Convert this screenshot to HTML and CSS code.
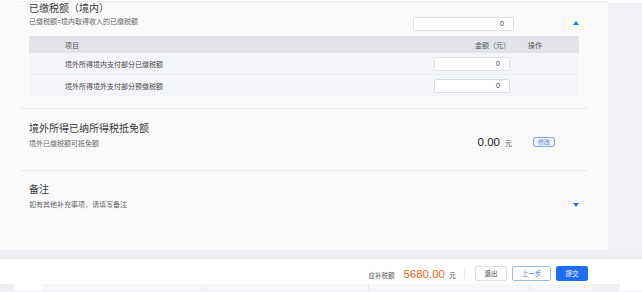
FILE: index.html
```html
<!DOCTYPE html>
<html lang="zh-CN">
<head>
    <meta charset="UTF-8">
    <title>已缴税额</title>
    <link rel="stylesheet" href="styles.css">
</head>
<body>
    <div class="page">
        <div class="main">
            <div class="top-edge"></div>

            <!-- 已缴税额（境内） -->
            <section class="block block-paid">
                <div class="block-head">
                    <div class="block-text">
                        <div class="block-title">已缴税额（境内）</div>
                        <div class="block-sub">已缴税额=境内取得收入的已缴税额</div>
                    </div>
                    <div class="block-side">
                        <div class="amount-input wide">0</div>
                        <span class="side-sep"></span>
                        <span class="caret up"></span>
                    </div>
                </div>
                <div class="items">
                    <div class="items-row items-header">
                        <div class="col-name">项目</div>
                        <div class="col-amount">金额（元）</div>
                        <div class="col-ops">操作</div>
                    </div>
                    <div class="items-row">
                        <div class="col-name">境外所得境内支付部分已缴税额</div>
                        <div class="col-amount"><div class="amount-input">0</div></div>
                        <div class="col-ops"></div>
                    </div>
                    <div class="items-row">
                        <div class="col-name">境外所得境外支付部分预缴税额</div>
                        <div class="col-amount"><div class="amount-input">0</div></div>
                        <div class="col-ops"></div>
                    </div>
                </div>
            </section>

            <!-- 境外所得已纳所得税抵免额 -->
            <section class="block block-credit">
                <div class="block-head">
                    <div class="block-text">
                        <div class="block-title">境外所得已纳所得税抵免额</div>
                        <div class="block-sub">境外已缴税额可抵免额</div>
                    </div>
                    <div class="block-side credit-side">
                        <span class="money">0.00</span>
                        <span class="unit">元</span>
                        <span class="edit-btn">修改</span>
                    </div>
                </div>
            </section>

            <!-- 备注 -->
            <section class="block block-note">
                <div class="block-head">
                    <div class="block-text">
                        <div class="block-title">备注</div>
                        <div class="block-sub">如有其他补充事项，请填写备注</div>
                    </div>
                    <div class="block-side note-side">
                        <span class="side-sep"></span>
                        <span class="caret down"></span>
                    </div>
                </div>
            </section>
        </div>
        <div class="aside"></div>
    </div>

    <div class="footer">
        <span class="due-label">应补税额</span>
        <span class="due-value">5680.00</span>
        <span class="unit">元</span>
        <span class="footer-sep"></span>
        <button class="btn">退出</button>
        <button class="btn btn-ghost">上一步</button>
        <button class="btn btn-primary">提交</button>
    </div>

    <div class="under">
        <div class="under-cell c1"></div>
        <div class="under-cell c2"></div>
        <div class="under-cell c3"></div>
        <div class="under-cell c4"></div>
        <div class="under-cell c5"></div>
        <div class="under-cell c6"></div>
        <div class="under-cell c7"></div>
        <div class="under-cell c8"></div>
    </div>
</body>
</html>
```

FILE: styles.css
```css
body {
    margin: 0;
    padding: 0;
    background-color: #eff1f5;
    font-family: 'Liberation Sans', 'Noto Sans CJK SC', sans-serif;
    color: #333;
    width: 642px;
    height: 292px;
    overflow: hidden;
}

.page {
    display: flex;
    height: 250px;
    border-bottom: 8px solid #eef0f4;
}

.main {
    width: 608px;
    background-color: #fafafa;
    padding: 0 20px;
    box-sizing: border-box;
}

.aside {
    flex: 1;
    background-color: #f0f2f6;
    border-top: 3px solid #fff;
}

.top-edge {
    height: 3px;
    background: linear-gradient(#fff 0, #fff 1px, #ebecef 1px, #ebecef 2px, #fafafa 2px);
    margin-right: -22px;
}

.block {
    padding: 0 9px;
    border-bottom: 1px solid #ebecef;
}

.block-head {
    display: flex;
    justify-content: space-between;
}

.block-title {
    font-size: 10px;
    line-height: 12px;
    color: #3a3a3a;
}

.block-sub {
    font-size: 7px;
    line-height: 10px;
    color: #666;
    margin-top: 2px;
}

.block-side {
    display: flex;
    align-items: center;
}

/* section 1 */
.block-paid {
    padding-bottom: 12px;
}

.block-paid .block-side {
    padding-top: 14px;
    align-items: flex-start;
}

.amount-input {
    width: 76px;
    height: 14px;
    box-sizing: border-box;
    background-color: #fff;
    border: 1px solid #dcdfe5;
    border-radius: 2px;
    font-size: 7px;
    line-height: 12px;
    text-align: right;
    padding-right: 9px;
    color: #333;
}

.amount-input.wide {
    width: 101px;
}

.side-sep {
    width: 1px;
    height: 14px;
    background-color: #eeeff2;
    margin-left: 49px;
}

.caret {
    width: 0;
    height: 0;
    margin-left: 9px;
    border-left: 3px solid transparent;
    border-right: 3px solid transparent;
}

.caret.up {
    border-bottom: 4px solid #2a6ef0;
    margin-top: 4px;
}

.caret.down {
    border-top: 4px solid #2a6ef0;
}

.items {
    margin-top: 5px;
    background-color: #f4f5f8;
}

.items-row {
    display: flex;
    align-items: center;
    height: 21px;
    font-size: 7px;
    color: #444;
}

.items-row + .items-row {
    border-top: 1px solid #e9eaee;
}

.items-header {
    height: 17px;
    background-color: #e1e3e8;
    color: #555;
}

.items-header + .items-row {
    border-top: 0;
}

.col-name {
    flex: 1;
    padding-left: 36px;
}

.col-amount {
    width: 76px;
    text-align: right;
}

.col-ops {
    width: 69px;
    padding-left: 18px;
    box-sizing: border-box;
}

/* section 2 */
.block-credit {
    padding-top: 14px;
    padding-bottom: 21px;
}

.block-credit .block-sub {
    margin-top: 4px;
}

.credit-side {
    padding-top: 12px;
    align-items: center;
}

.money {
    font-size: 11.5px;
    color: #222;
}

.unit {
    font-size: 7px;
    color: #555;
    margin-left: 5px;
    margin-top: 2px;
}

.edit-btn {
    width: 22px;
    height: 10px;
    box-sizing: border-box;
    border: 1px solid #86a8f2;
    border-radius: 2px;
    background-color: #eef3fe;
    color: #5a7fe2;
    font-size: 6px;
    line-height: 8px;
    text-align: center;
    margin-left: 21px;
    margin-right: 24px;
}

/* section 3 */
.block-note {
    padding-top: 13px;
    border-bottom: 0;
}

.block-note .block-sub {
    margin-top: 4px;
}

.note-side {
    padding-top: 12px;
}

.note-side .side-sep {
    height: 11px;
}

.note-side .caret.down {
    margin-top: 3px;
}

/* footer bar */
.footer {
    height: 26px;
    box-sizing: border-box;
    border-top: 1px solid #e4e6eb;
    background-color: #fff;
    display: flex;
    align-items: center;
    justify-content: flex-end;
    padding: 4px 54px 0 0;
}

.due-label {
    font-size: 6.5px;
    color: #555;
    margin-right: 9px;
    margin-top: 2px;
}

.due-value {
    font-size: 11.5px;
    color: #f5660f;
}

.footer .unit {
    margin-left: 4px;
}

.footer-sep {
    width: 1px;
    height: 10px;
    background-color: #e3e5ea;
    margin: 0 10px 0 8px;
}

.btn {
    height: 15px;
    padding: 0;
    width: 32px;
    box-sizing: border-box;
    border: 1px solid #dcdee3;
    border-radius: 2px;
    background-color: #fff;
    color: #444;
    font-family: inherit;
    font-size: 6.5px;
    line-height: 13px;
    margin-left: 5px;
}

.btn:first-of-type {
    margin-left: 0;
}

.btn-ghost {
    width: 39px;
    border-color: #9cbaf5;
    color: #3f77ea;
}

.btn-primary {
    border-color: #1f6df2;
    background-color: #1f6df2;
    color: #fff;
}

/* row of table lying under the bar */
.under {
    display: flex;
    height: 7px;
    background-color: #fff;
}

.under-cell {
    background-color: #f6f7f9;
}

.c1 { width: 14px; background-color: #eceef2; }
.c2 { width: 28px; background-color: #fff; }
.c3 { width: 163px; border-right: 1px solid #eceef1; }
.c4 { width: 162px; border-right: 1px solid #e6e8ec; }
.c5 { width: 160px; border-right: 1px solid #e6e8ec; }
.c6 { width: 63px; }
.c7 { width: 27px; background-color: #eef0f3; }
.c8 { flex: 1; background-color: #fff; }
```
